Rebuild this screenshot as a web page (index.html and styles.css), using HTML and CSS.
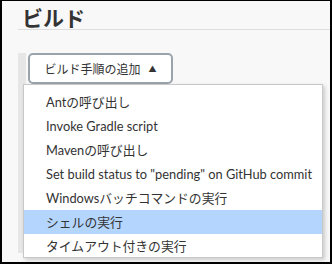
FILE: index.html
```html
<!DOCTYPE html>
<html lang="ja">
<head>
    <meta charset="UTF-8">
    <title>ビルド</title>
    <link rel="stylesheet" href="styles.css">
</head>
<body>

<div class="frame">
    <h1 class="section-title">ビルド</h1>

    <div class="builders">
        <div class="builder-stub"></div>
        <button class="add-step">ビルド手順の追加 <span class="caret">&#9650;</span></button>
    </div>

    <!-- dropdown opened over the page -->
    <ul class="step-menu">
        <li>Antの呼び出し</li>
        <li>Invoke Gradle script</li>
        <li>Mavenの呼び出し</li>
        <li>Set build status to "pending" on GitHub commit</li>
        <li>Windowsバッチコマンドの実行</li>
        <li class="active">シェルの実行</li>
        <li>タイムアウト付きの実行</li>
    </ul>
</div>

</body>
</html>
```

FILE: styles.css
```css
body {
    margin: 0;
    background-color: #000;
    font-family: Lato, "Noto Sans CJK JP", sans-serif;
}
.frame {
    position: relative;
    box-sizing: border-box;
    width: 332px;
    height: 264px;
    border: 2px solid #000;
    border-top-width: 1px;
    background-color: #f8f8f8;
    padding-left: 16px;
    overflow: hidden;
}
.section-title {
    margin: 0;
    padding: 1px 0 0 4px;
    height: 27px;
    font-size: 21px;
    font-weight: bold;
    color: #333;
    border-bottom: 1px solid #ddd;
}
.builders {
    display: flex;
    margin-top: 23px;
}
.builder-stub {
    width: 8px;
    height: 200px;
    background-color: #e6e6e6;
    margin-right: 2px;
}
.add-step {
    box-sizing: border-box;
    width: 145px;
    height: 31px;
    background-color: #fff;
    border: 2px solid #9aa4ad;
    border-radius: 5px;
    font-family: Lato, "Noto Sans CJK JP", sans-serif;
    font-size: 12px;
    color: #333;
    padding: 0;
}
.caret {
    font-size: 8px;
    margin-left: 5px;
    vertical-align: 2px;
}
.step-menu {
    position: absolute;
    left: 21px;
    top: 83px;
    width: 300px;
    height: 174px;
    box-sizing: border-box;
    margin: 0;
    padding: 5px 0 0;
    list-style-type: none;
    background-color: #fff;
    border: 1px solid #c8c8c8;
    box-shadow: 2px 2px 4px rgba(0, 0, 0, 0.18);
}
.step-menu li {
    height: 24px;
    line-height: 24px;
    padding-left: 22px;
    font-size: 12.8px;
    color: #333;
    white-space: nowrap;
}
.step-menu li.active {
    background-color: #b4d5fd;
}
```
